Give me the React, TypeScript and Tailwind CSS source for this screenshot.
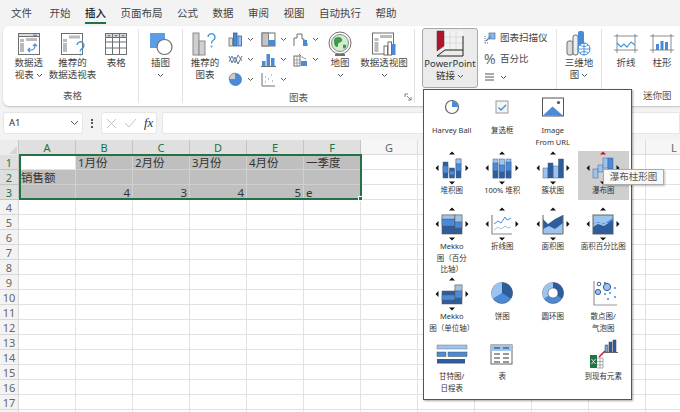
import type { ReactNode } from "react";

const tabs = ["开始", "插入", "页面布局", "公式", "数据", "审阅", "视图", "自动执行", "帮助"];
// H to K sit behind the open chart menu, so their letters never show
const columns = ["A", "B", "C", "D", "E", "F", "G", "", "", "", "", "L"];
const rows = Array.from({ length: 18 }, (_, i) => i + 1);

const DARK = "#2f5d9b";
const MID = "#4a8ad8";
const LIGHT = "#9cc4ef";
const LINE = "#6f6f6f";

function Chevron() {
  return (
    <svg width="7" height="5" viewBox="0 0 7 5" className="shrink-0">
      <path d="M1 1l2.5 2.5L6 1" fill="none" stroke="#555" strokeWidth="1" />
    </svg>
  );
}

function PivotIcon() {
  return (
    <svg width="24" height="24" viewBox="0 0 24 24">
      <rect x="1.5" y="1.5" width="21" height="21" fill="#fff" stroke={LINE} />
      <rect x="1.5" y="1.5" width="21" height="3" fill="#ddd" stroke={LINE} />
      <rect x="3" y="7" width="4" height="3" fill="#bbb" />
      <rect x="3" y="11" width="4" height="9" fill="#bbb" />
      <rect x="9" y="6" width="11" height="3" fill="#bbb" />
      <rect x="16" y="2.5" width="4" height="1.5" fill="#8a8ad0" />
      <path d="M11 18h3a4 4 0 0 0 4-4v-2m-2 2l2-2 2 2M13 16l-2 2 2 2" fill="none" stroke={MID} strokeWidth="1.2" />
    </svg>
  );
}

function RecommendPivotIcon() {
  return (
    <svg width="26" height="24" viewBox="0 0 26 24">
      <rect x="1.5" y="1.5" width="21" height="21" fill="#fff" stroke={LINE} />
      <rect x="3" y="7" width="4" height="3" fill="#bbb" />
      <rect x="3" y="11" width="4" height="9" fill="#bbb" />
      <rect x="9" y="3.5" width="11" height="3" fill="#bbb" />
      <path d="M17 13a3.5 3.5 0 1 1 5 3.5c-1.5.8-1.8 1.5-1.8 3" fill="none" stroke="#3f97dd" strokeWidth="1.4" />
      <circle cx="20.2" cy="22.5" r="1" fill="#3f97dd" />
    </svg>
  );
}

function TableIcon() {
  return (
    <svg width="24" height="24" viewBox="0 0 24 24">
      <rect x="1.5" y="1.5" width="21" height="21" fill="#fff" stroke={LINE} />
      <rect x="1.5" y="1.5" width="21" height="4" fill="#d8d8d8" stroke={LINE} />
      <path d="M8.5 1.5v21M15.5 1.5v21M1.5 10h21M1.5 16h21" stroke={LINE} />
      <path d="M3 3h4L5 5zM10 3h4l-2 2zM17 3h4l-2 2z" fill="#3f97dd" />
    </svg>
  );
}

function IllustrationIcon() {
  return (
    <svg width="24" height="24" viewBox="0 0 24 24">
      <rect x="1" y="1" width="15" height="15" fill="#5b9de6" />
      <circle cx="15.5" cy="15" r="7.5" fill="#fff" stroke={LINE} strokeWidth="1.2" />
    </svg>
  );
}

function RecommendChartIcon() {
  return (
    <svg width="26" height="26" viewBox="0 0 26 26">
      <rect x="1" y="2" width="6" height="22" fill="#cfcfcf" stroke="#8a8a8a" />
      <rect x="7" y="10" width="6" height="14" fill="#cfcfcf" stroke="#8a8a8a" />
      <path d="M16 6a3.5 3.5 0 1 1 5.5 3c-1.5 1-2 1.8-2 3.5" fill="none" stroke="#3f97dd" strokeWidth="1.4" />
      <circle cx="19.5" cy="15.5" r="1" fill="#3f97dd" />
    </svg>
  );
}

function SmallChart({ kind }: { kind: number }) {
  return (
    <svg width="15" height="15" viewBox="0 0 15 15" className="shrink-0">
      {kind === 0 && (
        <>
          <rect x="1" y="6" width="3.5" height="8" fill="#ddd" stroke={LINE} strokeWidth=".8" />
          <rect x="5.5" y="1" width="3.5" height="13" fill={MID} stroke={DARK} strokeWidth=".8" />
          <rect x="10" y="4" width="3.5" height="10" fill={LIGHT} stroke={DARK} strokeWidth=".8" />
        </>
      )}
      {kind === 1 && (
        <>
          <rect x="1" y="1" width="13" height="13" fill="#fff" stroke={LINE} />
          <rect x="1" y="1" width="6.5" height="13" fill="#c4c4c4" stroke={LINE} strokeWidth=".8" />
          <rect x="7.5" y="8" width="6.5" height="6" fill={MID} />
        </>
      )}
      {kind === 2 && (
        <>
          <path d="M1 14V6h3V2h5v5h2v4h3v3" fill="none" stroke={LINE} />
          <rect x="10" y="8" width="4" height="6" fill={MID} />
        </>
      )}
      {kind === 3 && (
        <>
          <path d="M1 10l3-6 3 7 3-8 4 6" fill="none" stroke={MID} />
          <path d="M1 4l3 7 3-6 3 7 4-8" fill="none" stroke={LINE} />
        </>
      )}
      {kind === 4 && (
        <>
          <rect x="1" y="9" width="3.5" height="5" fill={MID} />
          <rect x="5.5" y="2" width="3.5" height="12" fill={MID} />
          <rect x="10" y="6" width="3.5" height="8" fill={MID} />
          <path d="M0 14.5h15" stroke={LINE} />
        </>
      )}
      {kind === 5 && (
        <>
          <rect x="1" y="4" width="6" height="10" fill="#fff" stroke={LINE} />
          <rect x="8" y="9" width="6" height="5" fill={MID} />
          <path d="M1 8h6M1 11h6M4 4v10" stroke={LINE} strokeWidth=".6" />
          <path d="M6 2l3 3 4 2" fill="none" stroke="#333" strokeDasharray="1 1" />
        </>
      )}
      {kind === 6 && (
        <>
          <circle cx="7.5" cy="7.5" r="6.5" fill={MID} />
          <path d="M7.5 7.5V1a6.5 6.5 0 0 0-6.5 6.5z" fill="#ccc" stroke={LINE} strokeWidth=".6" />
        </>
      )}
      {kind === 7 && (
        <>
          <path d="M1 1v13h13" fill="none" stroke={LINE} />
          <path d="M4 10h1M7 7h1M10 3h1M11 9h1M4 5h1" stroke={MID} strokeWidth="1.2" />
        </>
      )}
    </svg>
  );
}

function MapIcon() {
  return (
    <svg width="26" height="26" viewBox="0 0 26 26">
      <circle cx="13" cy="12" r="11" fill="#fff" stroke={LINE} />
      <circle cx="13" cy="12" r="8.5" fill="#d5ecd3" stroke="#888" />
      <path d="M8 7c3-2 6-1 7 1s-1 3-3 4 0 4-2 4-3-3-3-5 0-3 1-4zM16 14c2-1 4 0 3 2s-3 2-3 0z" fill="#3f9a4a" />
      <path d="M8 24h10" stroke={LINE} strokeWidth="2" />
    </svg>
  );
}

function PivotChartIcon() {
  return (
    <svg width="26" height="26" viewBox="0 0 26 26">
      <rect x="1.5" y="2" width="21" height="21" fill="#fff" stroke={LINE} />
      <rect x="3.5" y="7" width="4" height="3" fill="#bbb" />
      <rect x="3.5" y="11" width="4" height="10" fill="#bbb" />
      <rect x="9" y="4" width="12" height="3" fill="#bbb" />
      <rect x="13" y="15" width="3.5" height="9" fill="#fff" stroke={LINE} />
      <rect x="17" y="11" width="3.5" height="13" fill="#fff" stroke={LINE} />
      <rect x="21" y="13" width="3.5" height="11" fill={MID} />
    </svg>
  );
}

function PowerPointIcon() {
  return (
    <svg width="30" height="28" viewBox="0 0 30 28">
      <path d="M9 1h19v19H9z" fill="#f2f2f2" />
      <path d="M9 7h19M9 13h19M15 1v19M21 1v19" stroke="#d4d4d4" strokeWidth=".8" />
      <path d="M2 1h7v15l-7 5z" fill="#b3142a" stroke="#3a3a3a" strokeWidth=".5" />
      <path d="M28 6v20H2l8-6h18" fill="none" stroke="#222" strokeWidth="1" />
    </svg>
  );
}

function Map3dIcon() {
  return (
    <svg width="26" height="28" viewBox="0 0 26 28">
      <rect x="1" y="11" width="6" height="14" rx="2" fill="#ddd" stroke={LINE} />
      <rect x="7" y="5" width="5" height="20" rx="2" fill="#eee" stroke={LINE} />
      <rect x="12" y="1" width="6" height="16" rx="2" fill={MID} />
      <circle cx="18" cy="19" r="6" fill="#fff" stroke="#2f83d0" />
      <path d="M12 19h12M18 13v12M14 15c3 2 5 2 8 0M14 23c3-2 5-2 8 0" fill="none" stroke="#2f83d0" strokeWidth=".8" />
    </svg>
  );
}

function SparkIcon({ bars }: { bars?: boolean }) {
  return (
    <svg width="24" height="20" viewBox="0 0 24 20">
      <path d="M0 2h24M0 16h24M3 0v19M21 0v19" stroke={LINE} strokeWidth=".8" />
      {bars ? (
        <>
          <rect x="6" y="10" width="3" height="6" fill={MID} />
          <rect x="10.5" y="7" width="3" height="9" fill={MID} />
          <rect x="15" y="8" width="3" height="8" fill={MID} />
        </>
      ) : (
        <path d="M3 9l4 4 3-3 3 3 4-5 4 3" fill="none" stroke="#3f97dd" strokeWidth="1.2" />
      )}
    </svg>
  );
}

function Big({ icon, children, className }: { icon: ReactNode; children: ReactNode; className: string }) {
  return (
    <div className={`flex flex-col items-center pt-[5px] text-[9.5px] leading-[12px] text-[#444] whitespace-nowrap ${className}`}>
      <div className="h-[26px] flex items-center justify-center">{icon}</div>
      {children}
    </div>
  );
}

function SmallPick({ kind }: { kind: number }) {
  return (
    <div className="flex items-center gap-[4px]">
      <SmallChart kind={kind} />
      <Chevron />
    </div>
  );
}

function Group({ label, className, children, launcher }: { label?: string; className: string; children: ReactNode; launcher?: boolean }) {
  return (
    <div className={`relative flex flex-col border-r border-[#e3e3e3] my-[3px] ${className}`}>
      <div className="flex flex-1 -mt-[3px]">{children}</div>
      {label && <div className="h-[18px] text-center text-[9.5px] leading-[22px] text-[#555]">{label}</div>}
      {launcher && (
        <svg width="8" height="8" viewBox="0 0 8 8" className="absolute right-[2px] bottom-[2px]">
          <path d="M1 4V1h3M3 3l3.5 3.5M7 4v3H4" fill="none" stroke="#666" strokeWidth=".8" />
        </svg>
      )}
    </div>
  );
}

function Ribbon() {
  return (
    <div className="ml-[3px] h-[80px] flex bg-white rounded-l-[6px] shadow-[0_1px_2px_rgba(0,0,0,0.2)]">
      <Group label="表格" className="w-[136px] pl-[4px]">
        <Big icon={<PivotIcon />} className="w-[44px]">
          数据透
          <span className="flex items-center gap-[2px]">视表 <Chevron /></span>
        </Big>
        <Big icon={<RecommendPivotIcon />} className="w-[44px]">
          推荐的
          <span>数据透视表</span>
        </Big>
        <Big icon={<TableIcon />} className="w-[44px]">表格</Big>
      </Group>
      <Group className="w-[44px]">
        <Big icon={<IllustrationIcon />} className="w-[43px]">
          插图
          <span className="h-[12px] flex items-center"><Chevron /></span>
        </Big>
      </Group>
      <Group label="图表" className="w-[233px]" launcher>
        <Big icon={<RecommendChartIcon />} className="w-[44px]">
          推荐的
          <span>图表</span>
        </Big>
        <div className="w-[99px] pl-px grid grid-cols-3 content-start gap-y-[5px] pt-[6px]">
          {[0, 1, 2, 3, 4, 5, 6, 7].map((k) => (
            <SmallPick key={k} kind={k} />
          ))}
        </div>
        <Big icon={<MapIcon />} className="w-[28px]">
          地图
          <span className="h-[12px] flex items-center"><Chevron /></span>
        </Big>
        <Big icon={<PivotChartIcon />} className="w-[60px]">
          数据透视图
          <span className="h-[12px] flex items-center"><Chevron /></span>
        </Big>
      </Group>
      <Group className="w-[144px] pl-[7px]">
        <div className="mt-[2px] w-[56px] h-[60px] bg-[#ebebeb] border border-[#a8a8a8] rounded-[3px] flex flex-col items-center pt-[1px] text-[9.5px] leading-[12px] text-[#333]">
          <PowerPointIcon />
          <span>PowerPoint</span>
          <span className="flex items-center gap-[2px]">链接 <Chevron /></span>
        </div>
        <div className="ml-[6px] pt-[5px] flex flex-col gap-[7px] text-[9.5px] leading-[14px] text-[#444]">
          <div className="flex items-center gap-[4px]">
            <svg width="12" height="12" viewBox="0 0 12 12">
              <path d="M1 11V4M1 11h4" stroke={LINE} strokeDasharray="1 1" />
              <rect x="5" y="1" width="6" height="6" fill="#8fb7e6" stroke={DARK} strokeWidth=".6" />
              <path d="M2 9l5-5" stroke={MID} strokeWidth="1.4" />
            </svg>
            图表扫描仪
          </div>
          <div className="flex items-center gap-[4px]">
            <span className="w-[12px] text-[14px] leading-[14px] text-[#666]">%</span>
            百分比
          </div>
          <div className="flex items-center gap-[6px] pl-[1px]">
            <svg width="9" height="8" viewBox="0 0 9 8">
              <path d="M0 1h9M0 4h9M0 7h9" stroke="#555" />
            </svg>
            <Chevron />
          </div>
        </div>
      </Group>
      <Group className="w-[45px]">
        <Big icon={<Map3dIcon />} className="w-[44px]">
          三维地
          <span className="flex items-center gap-[2px]">图 <Chevron /></span>
        </Big>
      </Group>
      <div className="flex-1 flex flex-col my-[3px]">
        <div className="flex flex-1 -mt-[3px] pl-[6px]">
          <Big icon={<SparkIcon />} className="w-[36px] shrink-0">折线</Big>
          <Big icon={<SparkIcon bars />} className="w-[36px] shrink-0">柱形</Big>
        </div>
        <div className="h-[18px] pl-[41px] text-[9.5px] leading-[22px] text-[#555]">迷你图</div>
      </div>
    </div>
  );
}

function FormulaBar() {
  return (
    <div className="h-[34px] pt-[6px] pb-[6px] flex items-stretch pl-[3px] gap-[5px]">
      <div className="w-[80px] bg-white rounded-[3px] border border-[#e6e6e6] flex items-center justify-between pl-[5px] pr-[3px] text-[9.5px] text-[#333]">
        A1
        <svg width="9" height="6" viewBox="0 0 9 6"><path d="M1 1l3.5 3.5L8 1" fill="none" stroke="#555" /></svg>
      </div>
      <div className="w-[8px] flex flex-col items-center justify-center gap-[1.5px]">
        <span className="w-[2px] h-[2px] bg-[#555]" />
        <span className="w-[2px] h-[2px] bg-[#555]" />
        <span className="w-[2px] h-[2px] bg-[#555]" />
      </div>
      <div className="w-[56px] bg-white rounded-[3px] border border-[#e6e6e6] flex items-center gap-[7px] pl-[4px]">
        <svg width="11" height="11" viewBox="0 0 11 11"><path d="M1 1l9 9M10 1l-9 9" stroke="#c4c4c4" /></svg>
        <svg width="13" height="11" viewBox="0 0 13 11"><path d="M1 5l4 4 7-8" fill="none" stroke="#c4c4c4" /></svg>
        <span className="text-[13px] italic font-medium font-['Liberation_Serif',serif] text-[#333]">fx</span>
      </div>
      <div className="flex-1 bg-white rounded-l-[3px] border border-[#e6e6e6]" />
    </div>
  );
}

function cellText(row: number, col: number) {
  if (row === 1 && col >= 1 && col <= 4) return `${col}月份`;
  if (row === 1 && col === 5) return "一季度";
  if (row === 2 && col === 0) return "销售额";
  if (row === 3 && col >= 1 && col <= 4) return String([4, 3, 4, 5][col - 1]);
  if (row === 3 && col === 5) return "e";
  return "";
}

function Sheet() {
  return (
    <div className="relative">
      <div className="grid grid-cols-[19px_repeat(12,57px)] auto-rows-[15px] bg-white">
        <div className="bg-[#ececec] flex items-end justify-end border-r border-[#c8c8c8]">
          <svg width="10" height="10" viewBox="0 0 10 10"><path d="M9 1v8H1z" fill="#d6d6d6" /></svg>
        </div>
        {columns.map((c, i) => (
          <div
            key={i}
            className={`text-center text-[11px] leading-[15px] border-r border-b ${i < 6 ? "bg-[#dfdfdf] text-[#217346] border-[#c4c4c4]" : "bg-[#f6f6f6] text-[#666] border-[#dcdcdc]"}`}
          >
            {c}
          </div>
        ))}
        {rows.map((r) => (
          <div key={r} className="contents">
            <div className={`text-center text-[11px] leading-[15px] border-r border-b ${r <= 3 ? "bg-[#dfdfdf] text-[#217346] border-[#c4c4c4]" : "bg-[#f3f3f3] text-[#666] border-[#d8d8d8]"}`}>
              {r < 18 ? r : ""}
            </div>
            {columns.map((_, c) => {
              const selected = r <= 3 && c < 6 && !(r === 1 && c === 0);
              const number = r === 3 && c < 5;
              return (
                <div
                  key={c}
                  className={`px-[2px] text-[11.5px] leading-[15px] text-[#333] border-r border-b whitespace-nowrap overflow-hidden ${number ? "text-right" : ""} ${selected ? "bg-[#bfbfbf] border-[#d0d0d0]" : "border-[#e2e2e2]"}`}
                >
                  {cellText(r, c)}
                </div>
              );
            })}
          </div>
        ))}
      </div>
      {/* selection outline over the cells */}
      <div className="absolute left-[19px] top-[14px] w-[343px] h-[46px] border-2 border-[#217346] pointer-events-none">
        <div className="absolute -right-[3px] -bottom-[3px] w-[5px] h-[5px] bg-[#217346] border border-white" />
      </div>
    </div>
  );
}

function ArrowChart({ children }: { children: ReactNode }) {
  return (
    <svg width="34" height="34" viewBox="0 0 34 34">
      <path d="M17 0.5l3 3h-6zM17 33.5l3-3h-6zM0.5 17l3-3v6zM33.5 17l-3-3v6z" fill="#111" />
      {children}
    </svg>
  );
}

function Bar({ x, y, w = 5, h, c }: { x: number; y: number; w?: number; h: number; c: string }) {
  return <rect x={x} y={y} width={w} height={h} fill={c} stroke="#3c5f8c" strokeWidth=".5" />;
}

const menuIcons: Record<string, ReactNode> = {
  harvey: (
    <svg width="34" height="34" viewBox="0 0 34 34">
      <circle cx="17" cy="16" r="6.5" fill="#fff" stroke="#666" strokeWidth="1.2" />
      <path d="M17 16v-6a6 6 0 0 1 6 6z" fill={MID} />
    </svg>
  ),
  check: (
    <svg width="34" height="34" viewBox="0 0 34 34">
      <rect x="11" y="10" width="12" height="12" fill="#f4f4f4" stroke="#999" />
      <path d="M13.5 16.5l2.5 2.5 5-5" fill="none" stroke={MID} strokeWidth="1.4" />
    </svg>
  ),
  image: (
    <svg width="34" height="34" viewBox="0 0 34 34">
      <rect x="6.5" y="7" width="21" height="18" fill="#fff" stroke="#555" />
      <path d="M7 24.5l9.5-9 11 9.5z" fill={MID} />
      <circle cx="22.5" cy="11.5" r="1.6" fill="#555" />
    </svg>
  ),
  stacked: (
    <ArrowChart>
      <Bar x={8} y={11} h={16} c={DARK} />
      <Bar x={8} y={15} h={7} c={MID} />
      <Bar x={14.5} y={17} h={10} c={DARK} />
      <Bar x={14.5} y={20} h={4} c={MID} />
      <Bar x={21} y={8} h={19} c={DARK} />
      <Bar x={21} y={8} h={5} c={LIGHT} />
      <Bar x={21} y={13} h={7} c={MID} />
    </ArrowChart>
  ),
  full: (
    <ArrowChart>
      {[8, 14.5, 21].map((x, i) => (
        <g key={x}>
          <Bar x={x} y={8} h={19} c={LIGHT} />
          <Bar x={x} y={[12, 14, 11][i]} h={[8, 7, 9][i]} c={MID} />
          <Bar x={x} y={[20, 21, 20][i]} h={[7, 6, 7][i]} c={DARK} />
        </g>
      ))}
    </ArrowChart>
  ),
  cluster: (
    <ArrowChart>
      <Bar x={7} y={17} h={10} c={LIGHT} />
      <Bar x={12} y={12} h={15} c={DARK} />
      <Bar x={17.5} y={15} h={12} c={LIGHT} />
      <Bar x={22.5} y={8} h={19} c={DARK} />
    </ArrowChart>
  ),
  waterfall: (
    <svg width="34" height="34" viewBox="0 0 34 34">
      <path d="M17 0.5l3 3h-6z" fill="#c8102e" />
      <path d="M17 33.5l3-3h-6zM0.5 17l3-3v6zM33.5 17l-3-3v6z" fill="#111" />
      <Bar x={7} y={18} h={9} c={LIGHT} />
      <Bar x={12} y={14} h={7} c={LIGHT} />
      <Bar x={17} y={7} h={10} c={LIGHT} />
      <Bar x={22} y={7} h={11} c={MID} />
    </svg>
  ),
  mekko: (
    <ArrowChart>
      <rect x="7" y="8" width="13" height="19" fill={DARK} stroke="#555" strokeWidth=".6" />
      <rect x="7" y="12" width="13" height="7" fill={MID} stroke="#555" strokeWidth=".4" />
      <rect x="7" y="8" width="13" height="4" fill={LIGHT} stroke="#555" strokeWidth=".4" />
      <rect x="20" y="8" width="7" height="19" fill={DARK} stroke="#555" strokeWidth=".6" />
      <rect x="20" y="8" width="7" height="7" fill={LIGHT} stroke="#555" strokeWidth=".4" />
      <rect x="20" y="15" width="7" height="6" fill={MID} stroke="#555" strokeWidth=".4" />
    </ArrowChart>
  ),
  line: (
    <ArrowChart>
      <path d="M7 8v19h20" fill="none" stroke="#8a8a8a" strokeWidth="1.2" />
      <path d="M9 17l4-3 3 2 4-6 2 3 4-2" fill="none" stroke={MID} />
      <path d="M9 23l4-3 3 2 4-3 3 2 3-1" fill="none" stroke={LIGHT} />
    </ArrowChart>
  ),
  area: (
    <ArrowChart>
      <rect x="7" y="8" width="20" height="19" fill="#fff" />
      <path d="M7 12l5 5 7-5 8-4v19H7z" fill={DARK} />
      <path d="M7 22l6-3 6 3 8-6v11H7z" fill={LIGHT} />
      <path d="M7 8v19h20V8" fill="none" stroke="#666" />
    </ArrowChart>
  ),
  areaFull: (
    <ArrowChart>
      <rect x="7" y="8" width="20" height="19" fill={LIGHT} stroke="#666" />
      <path d="M7 17l5-2 6 2 9-6v5H7z" fill={MID} />
      <path d="M7 20l5-3 6 2 9-6v14H7z" fill={DARK} />
    </ArrowChart>
  ),
  mekkoUnit: (
    <ArrowChart>
      <rect x="7" y="14" width="13" height="13" fill={DARK} stroke="#555" strokeWidth=".5" />
      <rect x="7" y="18" width="13" height="5" fill={MID} stroke="#555" strokeWidth=".4" />
      <rect x="20" y="8" width="7" height="19" fill={DARK} stroke="#555" strokeWidth=".5" />
      <rect x="20" y="8" width="7" height="6" fill={LIGHT} stroke="#555" strokeWidth=".4" />
      <rect x="20" y="14" width="7" height="7" fill={MID} stroke="#555" strokeWidth=".4" />
    </ArrowChart>
  ),
  pie: (
    <svg width="34" height="34" viewBox="0 0 34 34">
      <circle cx="17" cy="16" r="10.5" fill={MID} stroke="#555" strokeWidth=".6" />
      <path d="M17 16V5.5A10.5 10.5 0 0 1 26 21.5z" fill={DARK} />
      <path d="M17 16V5.5A10.5 10.5 0 0 0 8 21.5z" fill={LIGHT} />
    </svg>
  ),
  donut: (
    <svg width="34" height="34" viewBox="0 0 34 34">
      <circle cx="17" cy="16" r="10.5" fill={MID} stroke="#555" strokeWidth=".6" />
      <path d="M17 16V5.5A10.5 10.5 0 0 1 26 21.5z" fill={DARK} />
      <path d="M17 16V5.5A10.5 10.5 0 0 0 8 21.5z" fill={LIGHT} />
      <circle cx="17" cy="16" r="5" fill="#fff" stroke="#555" strokeWidth=".6" />
    </svg>
  ),
  scatter: (
    <svg width="34" height="34" viewBox="0 0 34 34">
      <path d="M8 4v24h23" fill="none" stroke="#999" strokeWidth="1.2" />
      <circle cx="13" cy="7" r="1.8" fill="#fff" stroke={DARK} />
      <circle cx="19" cy="6" r="1" fill={DARK} />
      <circle cx="12" cy="15" r="2.6" fill={LIGHT} stroke={DARK} />
      <circle cx="21" cy="10" r="3.6" fill={LIGHT} stroke={DARK} />
      <circle cx="29" cy="11" r="1" fill={MID} />
      <circle cx="24" cy="16" r="1" fill={MID} />
      <circle cx="19" cy="17" r="1" fill={MID} />
      <circle cx="29" cy="20" r="1" fill={MID} />
      <circle cx="22" cy="22" r="1" fill={MID} />
    </svg>
  ),
  gantt: (
    <svg width="34" height="34" viewBox="0 0 34 34">
      <rect x="2" y="8" width="30" height="4" fill={LIGHT} stroke="#777" strokeWidth=".5" />
      <rect x="2" y="15" width="9" height="4.5" fill={MID} stroke="#555" strokeWidth=".5" />
      <rect x="13" y="15" width="19" height="4.5" fill={MID} stroke="#555" strokeWidth=".5" />
      <rect x="2" y="22" width="28" height="4.5" fill={DARK} />
    </svg>
  ),
  table: (
    <svg width="34" height="34" viewBox="0 0 34 34">
      <rect x="6" y="8" width="21" height="19" fill="#fff" stroke="#666" />
      <rect x="6" y="8" width="21" height="6" fill={LIGHT} />
      <path d="M9 11h6M18 11h6M9 17h6M18 17h6M9 21h6M18 21h6M9 25h6M18 25h6" stroke="#333" />
    </svg>
  ),
  existing: (
    <svg width="34" height="34" viewBox="0 0 34 34">
      <rect x="4" y="18" width="7" height="13" fill="#217346" />
      <path d="M5.5 22l4 5M9.5 22l-4 5" stroke="#fff" strokeWidth=".8" />
      <path d="M11 21h6v10h-6M11 24.5h6M11 28h6M14 21v10" fill="none" stroke="#777" strokeWidth=".6" />
      <path d="M13 20l6-6" stroke="#d6183f" strokeWidth="1.6" />
      <rect x="19" y="8" width="3" height="7" fill="#7aa2d8" stroke="#444" strokeWidth=".5" />
      <rect x="23" y="5" width="3" height="10" fill={DARK} stroke="#444" strokeWidth=".5" />
      <rect x="27" y="3" width="3" height="12" fill={DARK} stroke="#444" strokeWidth=".5" />
      <path d="M17 15.5h15" stroke="#666" />
    </svg>
  ),
};

const menuItems: { icon?: string; lines: string[]; hover?: boolean }[] = [
  { icon: "harvey", lines: ["Harvey Ball"] },
  { icon: "check", lines: ["复选框"] },
  { icon: "image", lines: ["Image", "From URL"] },
  {},
  { icon: "stacked", lines: ["堆积图"] },
  { icon: "full", lines: ["100% 堆积"] },
  { icon: "cluster", lines: ["簇状图"] },
  { icon: "waterfall", lines: ["瀑布图"], hover: true },
  { icon: "mekko", lines: ["Mekko", "图（百分", "比轴）"] },
  { icon: "line", lines: ["折线图"] },
  { icon: "area", lines: ["面积图"] },
  { icon: "areaFull", lines: ["面积百分比图"] },
  { icon: "mekkoUnit", lines: ["Mekko", "图（单位轴）"] },
  { icon: "pie", lines: ["饼图"] },
  { icon: "donut", lines: ["圆环图"] },
  { icon: "scatter", lines: ["散点图/", "气泡图"] },
  { icon: "gantt", lines: ["甘特图/", "日程表"] },
  { icon: "table", lines: ["表"] },
  {},
  { icon: "existing", lines: ["到现有元素"] },
].map((m) => ({ lines: [], ...m }));

function ChartMenu() {
  return (
    <div className="absolute left-[423px] top-[89px] w-[209px] h-[311px] bg-white border border-[#555] shadow-[1px_1px_2px_rgba(0,0,0,0.35)] pl-[2.5px] pt-px">
      <div className="grid grid-cols-[repeat(4,50.5px)] grid-rows-[60px_56px_70px_60px_60px]">
        {menuItems.map((item, i) => (
          <div key={i} className={`self-start flex flex-col items-center text-center text-[7.5px] leading-[11.5px] text-[#333] whitespace-nowrap ${item.hover ? "h-[49px] bg-[#cfcfcf]" : ""}`}>
            {item.icon && <div className="h-[34px]">{menuIcons[item.icon]}</div>}
            {item.lines.map((l) => (
              <span key={l}>{l}</span>
            ))}
          </div>
        ))}
      </div>
    </div>
  );
}

export default function App() {
  return (
    <div className="relative w-[680px] h-[412px] overflow-hidden bg-[#f3f3f3] font-['Noto_Sans','Noto_Sans_CJK_SC',sans-serif]">
      <div className="h-[26px] flex items-start pl-[11px] pt-[5px] gap-[14.5px] text-[10.5px] leading-[16px] text-[#444]">
        <span className="mr-[3px]">文件</span>
        {tabs.map((t) => (
          <span key={t} className={t === "插入" ? "relative font-medium text-[#222]" : ""}>
            {t}
            {t === "插入" && <span className="absolute left-0 right-0 top-[17px] h-[2px] bg-[#217346]" />}
          </span>
        ))}
      </div>
      <Ribbon />
      <FormulaBar />
      <Sheet />
      <ChartMenu />
      {/* tooltip on the hovered waterfall item */}
      <div className="absolute left-[603px] top-[169px] w-[61px] h-[16px] bg-[#f8f8f8] border border-[#aaa] shadow-[1px_1px_2px_rgba(0,0,0,0.25)] text-center text-[9.5px] leading-[14px] text-[#555]">
        瀑布柱形图
      </div>
    </div>
  );
}
